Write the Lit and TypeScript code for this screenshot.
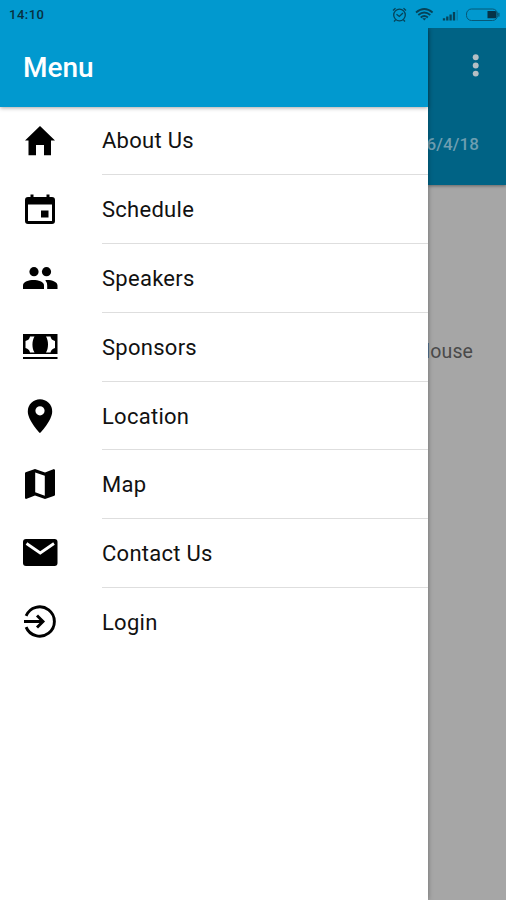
import { LitElement, html, svg, css } from "lit";
import { customElement } from "lit/decorators.js";

const items = [
  { label: "About Us", icon: svg`<path d="M20 20 35 34.500H31V49.300H24V39H16V49.300H8.500V34.500H5Z"/>` },
  {
    label: "Schedule",
    icon: svg`<path fill-rule="evenodd" d="M10.500 19.500h3V22h13v-2.500h3V22H32q3 0 3 3V46q0 3-3 3H8q-3 0-3-3V25q0-3 3-3h2.500ZM8 29.500V46H32V29.500Z"/><path d="M21 35.500h7.500v7H21Z"/>`,
  },
  {
    label: "Speakers",
    icon: svg`<circle cx="14" cy="27.700" r="4.600"/><circle cx="26.500" cy="27.700" r="4.600"/><path d="M3 45V41.500C3 37.500 9 36 13.500 36S24 37.500 24 41.500V45Z"/><path d="M25.300 36.200C31 35.700 37.500 37.700 37.500 41.500V45H27.200V41.500Q27.200 38.500 25.300 36.200Z"/>`,
  },
  {
    label: "Sponsors",
    icon: svg`<path fill-rule="evenodd" d="M3 21H37.500V41H3ZM14.500 23.500H10Q9.500 27 5.500 28V35Q9.500 36 10 39.500H14.500C11.800 35.500 11.800 27.500 14.500 23.500ZM26 23.500H30.500Q31 27 35 28V35Q31 36 30.500 39.500H26C28.700 35.500 28.700 27.500 26 23.500Z"/><path d="M3 44H37.500V46H3Z"/>`,
  },
  {
    label: "Location",
    icon: svg`<path fill-rule="evenodd" d="M20 17.300A12.200 12.200 0 0 0 7.800 29.400C7.800 38.500 20 51 20 51S32.200 38.500 32.200 29.400A12.200 12.200 0 0 0 20 17.300ZM20 24.200a4.600 4.600 0 1 1 0 9.200a4.600 4.600 0 1 1 0-9.200Z"/>`,
  },
  {
    label: "Map",
    icon: svg`<path fill-rule="evenodd" d="M34 19.100 25 22.500 15 19 5.600 22.200 5 23V48.300L6 49 15 45.500 25 49 34.400 45.800 35 45V19.900ZM15.200 22.500 24.800 25.800V45.700L15.200 42.300Z"/>`,
  },
  {
    label: "Contact Us",
    icon: svg`<path d="M6 20H34.500Q37.500 20 37.500 23V44Q37.500 47 34.500 47H6Q3 47 3 44V23Q3 20 6 20Z"/><path d="M6.500 24.500 20.250 34 34 24.500" fill="none" stroke="#fff" stroke-width="2.800"/>`,
  },
  {
    label: "Login",
    icon: svg`<g fill="none" stroke="#000" stroke-width="2.900"><path d="M6.100 27.900A14.700 14.700 0 1 1 6.100 39.100"/><path d="M4 33.500H22.500M17 27.500l6 6-6 6"/></g>`,
  },
];

@customElement("app-root")
export class AppRoot extends LitElement {
  static styles = css`
    :host {
      display: flex;
      flex-direction: column;
      width: 506px;
      height: 900px;
      overflow: hidden;
      background: #fff;
      font-family: Roboto, sans-serif;
      color: #111;
    }
    .status {
      flex: none;
      height: 28px;
      display: flex;
      align-items: center;
      justify-content: space-between;
      background: #0199cf;
      padding-left: 9px;
      color: #07303f;
    }
    .clock {
      font-size: 13px;
      font-weight: 500;
      letter-spacing: 0.500px;
      line-height: 28px;
      padding-top: 2px;
    }
    .indicators {
      display: block;
      width: 120px;
      height: 28px;
    }
    .body {
      flex: 1;
      display: flex;
      min-height: 0;
    }
    .drawer {
      width: 428px;
      flex: none;
      display: flex;
      flex-direction: column;
      background: #fff;
      z-index: 1;
      box-shadow: 0 0 5px rgba(0, 0, 0, 0.35);
      clip-path: inset(0 -8px 0 0);
    }
    .title {
      flex: none;
      height: 79px;
      box-sizing: border-box;
      padding-left: 23px;
      line-height: 79px;
      background: #0199cf;
      color: #fff;
      font-size: 28px;
      font-weight: 500;
      box-shadow: 0 1px 4px rgba(0, 0, 0, 0.35);
      z-index: 1;
    }
    .list {
      margin-top: -1px;
    }
    .row {
      height: 68.900px;
      display: flex;
      padding-left: 20px;
    }
    .icon {
      width: 40px;
      height: 68px;
      flex: none;
    }
    .label {
      flex: 1;
      margin-left: 42px;
      border-bottom: 1px solid #dedede;
      line-height: 69px;
      font-size: 22px;
      letter-spacing: 0.270px;
    }
    .row:last-child .label {
      border-bottom: 0;
    }
    .page {
      flex: 1;
      min-width: 0;
      display: flex;
      flex-direction: column;
      background: #a6a6a6;
      overflow: hidden;
    }
    .bar {
      flex: none;
      height: 157px;
      background: #006385;
      box-shadow: 0 1px 3px rgba(0, 0, 0, 0.4);
      display: flex;
      flex-direction: column;
      align-items: flex-end;
    }
    .more {
      width: 20px;
      height: 77px;
      margin-right: 20px;
      fill: #b5bfc4;
    }
    .date {
      margin-right: 27px;
      line-height: 82px;
      font-size: 17px;
      font-weight: 500;
      letter-spacing: 0.100px;
      color: #6d9eb1;
      white-space: nowrap;
    }
    .place {
      align-self: flex-end;
      margin: 152px 33px 0 0;
      line-height: 30px;
      font-size: 19.500px;
      letter-spacing: 0.100px;
      color: #4a4a4a;
    }
  `;

  render() {
    return html`
      <div class="status">
        <span class="clock">14:10</span>
        <svg class="indicators" viewBox="386 0 120 28" fill="none" stroke="#064258" stroke-width="1.300">
          <circle cx="399.500" cy="15" r="5.800" />
          <path d="M396.500 14.300 399.300 16.500 403 13M393 10.500 395.500 8.200M403.500 8.200 406 10.500M395.500 20 394 21.500M403.500 20 405 21.500" />
          <path d="M416 12.500Q424.300 5.500 432.600 12.500M418.300 15Q424.300 10 430.300 15M420.700 17.500Q424.300 14.500 427.900 17.500" stroke-width="1.800" />
          <path d="M422.300 18.200h4L424.300 20.500Z" fill="#064258" stroke="none" />
          <path d="M444 20.500v-2.200M447.300 20.500v-4M450.600 20.500v-6M454 20.500v-8.500" stroke-width="2.300" />
          <path d="M457.200 20.500v-10.500" stroke="#087ba4" stroke-width="1.200" />
          <rect x="466.500" y="9" width="31" height="11.500" rx="5" stroke="#075877" stroke-width="1" />
          <path d="M487.500 11H495q1.500 0 1.500 1.500V16.800q0 1.500-1.500 1.500h-7.500Z" fill="#063347" stroke="none" />
          <path d="M498.900 12.800v3.800" stroke-width="1" />
        </svg>
      </div>
      <div class="body">
        <div class="drawer">
          <div class="title">Menu</div>
          <div class="list">
            ${items.map(
              (i) => html`<div class="row">
                <svg class="icon" viewBox="0 0 40 68">${i.icon}</svg>
                <span class="label">${i.label}</span>
              </div>`
            )}
          </div>
        </div>
        <div class="page">
          <div class="bar">
            <svg class="more" viewBox="0 0 20 76">
              <circle cx="9.700" cy="29.700" r="3" /><circle cx="9.700" cy="38" r="3" /><circle cx="9.700" cy="46.200" r="3" />
            </svg>
            <div class="date">6/4/18</div>
          </div>
          <div class="place">House</div>
        </div>
      </div>
    `;
  }
}
